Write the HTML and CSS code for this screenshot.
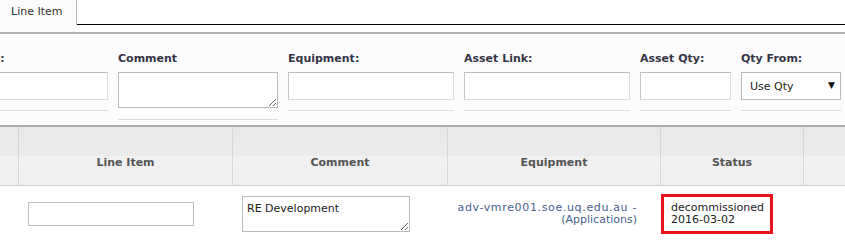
FILE: index.html
```html
<!DOCTYPE html>
<html lang="en">
  <head>
    <meta charset="UTF-8" />
    <title>Line Item</title>
    <link rel="stylesheet" href="styles.css">
  </head>
  <body>
    <div class="tabs">
      <div class="tab">Line Item</div>
      <div class="tab-fill"></div>
    </div>

    <div class="panel">
      <div class="fields">
        <div class="field field-wide">
          <label>Line Item:</label>
          <input type="text" />
        </div>
        <div class="field field-comment">
          <label>Comment</label>
          <textarea></textarea>
        </div>
        <div class="field field-wide">
          <label>Equipment:</label>
          <input type="text" />
        </div>
        <div class="field field-wide">
          <label>Asset Link:</label>
          <input type="text" />
        </div>
        <div class="field field-qty">
          <label>Asset Qty:</label>
          <input type="text" />
        </div>
        <div class="field field-select">
          <label>Qty From:</label>
          <div class="select-wrap">
            <select>
              <option>Use Qty</option>
            </select>
          </div>
        </div>
      </div>
    </div>

    <div class="grid">
      <div class="th th-first"></div>
      <div class="th">Line Item</div>
      <div class="th">Comment</div>
      <div class="th">Equipment</div>
      <div class="th">Status</div>
      <div class="th"></div>

      <div class="td"></div>
      <div class="td td-input"><input type="text" class="row-input" /></div>
      <div class="td td-input"><textarea class="row-textarea">RE Development</textarea></div>
      <div class="td td-equipment">
        <a href="#"><span class="host">adv-vmre001.soe.uq.edu.au -</span><br />(Applications)</a>
      </div>
      <div class="td">
        <div class="status">decommissioned<br />2016-03-02</div>
      </div>
      <div class="td"></div>
    </div>
  </body>
</html>
```

FILE: styles.css
```css
* {
  margin: 0;
  padding: 0;
  box-sizing: border-box;
}

body {
  font-family: "DejaVu Sans", Verdana, sans-serif;
  font-size: 11px;
  color: #222;
  background: #fff;
  width: 845px;
  overflow: hidden;
}

/* tabs */
.tabs {
  display: flex;
  padding-bottom: 7px;
  border-bottom: 2px solid #b0b0b0;
  background: linear-gradient(to right, #fbfbfb 77px, #fff 77px);
}

.tab {
  width: 77px;
  height: 25px;
  line-height: 24px;
  padding-left: 11px;
  color: #333;
  background: #fbfbfb;
  border-right: 1px solid #b8b8b8;
}

.tab-fill {
  flex: 1;
  height: 25px;
  border-bottom: 1px solid #000;
}

/* filter panel */
.panel {
  background: #fcfcfc;
  padding: 18px 0 5px;
  overflow: hidden;
}

.fields {
  display: flex;
  align-items: flex-start;
  gap: 10px;
  margin-left: -58px;
}

.field {
  padding-bottom: 10px;
  border-bottom: 1px solid #dcdcdc;
}

.field label {
  display: block;
  font-weight: bold;
  line-height: 13px;
  margin-bottom: 7px;
  color: #353545;
  white-space: nowrap;
}

.field input,
.field textarea,
.field select {
  display: block;
  width: 100%;
  font-family: inherit;
  font-size: 11px;
  background: #fff;
}

.field input {
  height: 28px;
  border: 1px solid;
  border-color: #bdbdbd #dedede #dedede #c4c4c4;
}

.field textarea {
  height: 36px;
  border: 1px solid #bbb;
  resize: vertical;
}

.field-wide {
  width: 166px;
}

.field-comment {
  width: 160px;
  padding-bottom: 11px;
}

.field-qty {
  width: 91px;
}

.field-select {
  width: 100px;
}

.select-wrap {
  position: relative;
}

.field select {
  appearance: none;
  -webkit-appearance: none;
  height: 28px;
  border: 1px solid #bbb;
  padding-left: 8px;
  color: #222;
}

.select-wrap::after {
  content: "\25BC";
  position: absolute;
  right: 6px;
  top: 8px;
  font-size: 9px;
  color: #111;
}

/* grid */
.grid {
  display: grid;
  grid-template-columns: 18px 214px 215px 213px 143px 1fr;
  border-top: 2px solid #ababab;
}

.th {
  height: 59px;
  display: flex;
  align-items: flex-end;
  justify-content: center;
  padding-bottom: 16px;
  font-weight: bold;
  color: #555;
  border-left: 1px solid #d6d6d6;
  border-bottom: 1px solid #d0d0d0;
  background: linear-gradient(to bottom, #e9e9e9, #ebebeb 50%, #f1f1f1 50%, #efefef);
}

.th-first {
  border-left: none;
}

.td {
  height: 56px;
  display: flex;
  align-items: center;
}

.td-input {
  padding-left: 10px;
}

.row-input {
  width: 166px;
  height: 24px;
  border: 1px solid #c0c0c0;
  font-family: inherit;
  font-size: 11px;
}

.row-textarea {
  width: 168px;
  height: 36px;
  border: 1px solid #bbb;
  padding: 5px 4px;
  font-family: inherit;
  font-size: 11px;
  line-height: 13px;
  color: #222;
  resize: vertical;
}

.td-equipment {
  justify-content: flex-end;
  padding-right: 23px;
  text-align: right;
  line-height: 12px;
}

.td-equipment a {
  color: #4a5f8f;
  text-decoration: none;
}

.td-equipment .host {
  letter-spacing: 0.65px;
}

.status {
  margin-left: 1px;
  width: 112px;
  border: 3px solid #e8141c;
  padding: 5px 7px;
  line-height: 12px;
  color: #222;
}
```
